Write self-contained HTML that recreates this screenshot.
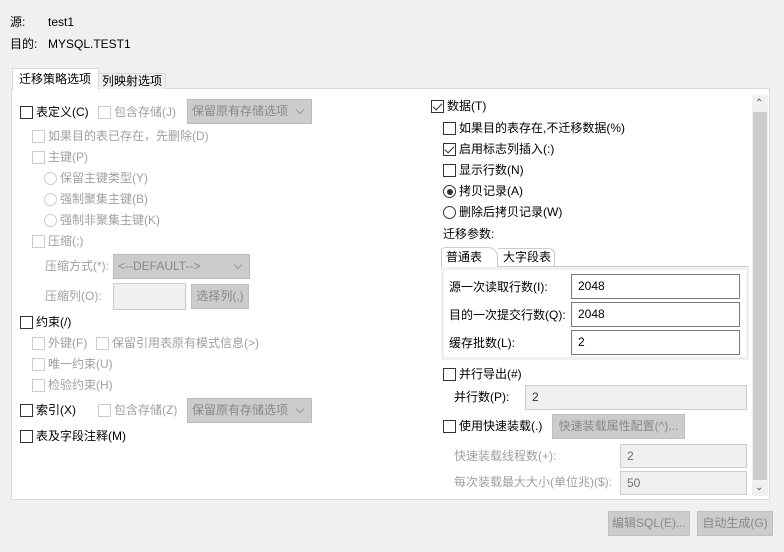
<!DOCTYPE html><html><head><meta charset="utf-8"><style>
*{box-sizing:border-box;margin:0;padding:0}
body{width:784px;height:552px;background:#f0f0f0;font:12px "Liberation Sans","Noto Sans CJK SC",sans-serif;color:#000;position:relative;overflow:hidden}
.a{position:absolute;white-space:nowrap;line-height:16px}
.g{color:#a0a0a0}
.cb{position:absolute;width:13px;height:13px;border:1px solid #333;background:#fff}
.cb.d{border-color:#ccc}
.rd{position:absolute;width:13px;height:13px;border:1px solid #333;border-radius:50%;background:#fff}
.rd.d{border-color:#ccc}
.combo{position:absolute;background:#ccc;border:1px solid #bbb;color:#888;padding-left:4px;line-height:22px;white-space:nowrap;overflow:hidden}
.combo:after{content:"";position:absolute;right:8px;top:7px;width:5px;height:5px;border-right:1px solid #999;border-bottom:1px solid #999;transform:rotate(45deg)}
.in{position:absolute;background:#fff;border:1px solid #7a7a7a;padding-left:6px;line-height:22px}
.in.d{background:#f0f0f0;border-color:#ccc;color:#6d6d6d}
.btn{position:absolute;background:#ccc;border:1px solid #bfbfbf;color:#888;text-align:center;line-height:22px;white-space:nowrap;overflow:hidden}
.ck:after{content:"";position:absolute;left:3px;top:0px;width:4px;height:8px;border-right:1.5px solid #333;border-bottom:1.5px solid #333;transform:rotate(45deg)}
</style></head><body>
<div class="a" style="left:10px;top:14px">源:</div><div class="a" style="left:48px;top:14px">test1</div>
<div class="a" style="left:10px;top:36px">目的:</div><div class="a" style="left:48px;top:36px">MYSQL.TEST1</div>
<div style="position:absolute;left:11px;top:88px;width:759px;height:412px;background:#fff;border:1px solid #d9d9d9"></div>
<div style="position:absolute;left:98px;top:73px;width:68px;height:16px;background:#f0f0f0;border:1px solid #d9d9d9;border-bottom:none"></div>
<div class="a" style="left:102px;top:73px">列映射选项</div>
<div style="position:absolute;left:12px;top:68px;width:87px;height:22px;background:#fff;border:1px solid #d9d9d9;border-bottom:none"></div>
<div class="a" style="left:19px;top:71px">迁移策略选项</div>
<!-- scrollbar -->
<div style="position:absolute;left:752px;top:95px;width:16px;height:401px;background:#f0f0f0"></div>
<div style="position:absolute;left:753px;top:112px;width:14px;height:368px;background:#cdcdcd"></div>
<div class="a" style="left:755px;top:96px;font-size:10px;color:#555">&#8963;</div>
<div class="a" style="left:755px;top:480px;font-size:10px;color:#555">&#8964;</div>
<!-- left -->
<div class="cb" style="left:20px;top:106px"></div><div class="a" style="left:36px;top:104px">表定义(C)</div>
<div class="cb d" style="left:98px;top:106px"></div><div class="a g" style="left:114px;top:104px">包含存储(J)</div>
<div class="combo" style="left:187px;top:99px;width:125px;height:25px">保留原有存储选项</div>
<div class="cb d" style="left:32px;top:130px"></div><div class="a g" style="left:48px;top:128px">如果目的表已存在，先删除(D)</div>
<div class="cb d" style="left:32px;top:151px"></div><div class="a g" style="left:48px;top:149px">主键(P)</div>
<div class="rd d" style="left:44px;top:172px"></div><div class="a g" style="left:60px;top:170px">保留主键类型(Y)</div>
<div class="rd d" style="left:44px;top:193px"></div><div class="a g" style="left:60px;top:191px">强制聚集主键(B)</div>
<div class="rd d" style="left:44px;top:214px"></div><div class="a g" style="left:60px;top:212px">强制非聚集主键(K)</div>
<div class="cb d" style="left:32px;top:235px"></div><div class="a g" style="left:48px;top:233px">压缩(;)</div>
<div class="a g" style="left:45px;top:258px">压缩方式(*):</div>
<div class="combo" style="left:113px;top:254px;width:137px;height:25px">&lt;--DEFAULT--&gt;</div>
<div class="a g" style="left:45px;top:288px">压缩列(O):</div>
<div class="in d" style="left:113px;top:283px;width:73px;height:27px"></div>
<div class="btn" style="left:191px;top:284px;width:58px;height:25px">选择列(,)</div>
<div class="cb" style="left:20px;top:316px"></div><div class="a" style="left:36px;top:314px">约束(/)</div>
<div class="cb d" style="left:32px;top:337px"></div><div class="a g" style="left:48px;top:335px">外键(F)</div>
<div class="cb d" style="left:96px;top:337px"></div><div class="a g" style="left:112px;top:335px">保留引用表原有模式信息(&gt;)</div>
<div class="cb d" style="left:32px;top:358px"></div><div class="a g" style="left:48px;top:356px">唯一约束(U)</div>
<div class="cb d" style="left:32px;top:379px"></div><div class="a g" style="left:48px;top:377px">检验约束(H)</div>
<div class="cb" style="left:20px;top:404px"></div><div class="a" style="left:36px;top:402px">索引(X)</div>
<div class="cb d" style="left:98px;top:404px"></div><div class="a g" style="left:114px;top:402px">包含存储(Z)</div>
<div class="combo" style="left:187px;top:398px;width:125px;height:25px">保留原有存储选项</div>
<div class="cb" style="left:20px;top:430px"></div><div class="a" style="left:36px;top:428px">表及字段注释(M)</div>
<!-- right -->
<div class="cb ck" style="left:431px;top:100px"></div><div class="a" style="left:447px;top:98px">数据(T)</div>
<div class="cb" style="left:443px;top:122px"></div><div class="a" style="left:459px;top:120px">如果目的表存在,不迁移数据(%)</div>
<div class="cb ck" style="left:443px;top:143px"></div><div class="a" style="left:459px;top:141px">启用标志列插入(:)</div>
<div class="cb" style="left:443px;top:164px"></div><div class="a" style="left:459px;top:162px">显示行数(N)</div>
<div class="rd" style="left:443px;top:185px"><div style="position:absolute;left:2.5px;top:2.5px;width:6px;height:6px;border-radius:50%;background:#333"></div></div><div class="a" style="left:459px;top:183px">拷贝记录(A)</div>
<div class="rd" style="left:443px;top:206px"></div><div class="a" style="left:459px;top:204px">删除后拷贝记录(W)</div>
<div class="a" style="left:443px;top:226px">迁移参数:</div>
<div style="position:absolute;left:441px;top:266px;width:308px;height:94px;background:#f0f0f0;border-top:1px solid #ccc"></div>
<div style="position:absolute;left:444px;top:270px;width:302px;height:87px;background:#fff"></div>
<div style="position:absolute;left:441px;top:247px;width:57px;height:20px;background:#fff;border:1px solid #ccc;border-bottom:none;border-radius:4px 10px 0 0"></div>
<div class="a" style="left:446px;top:249px">普通表</div>
<div style="position:absolute;left:498px;top:248px;width:57px;height:18px;border-right:1px solid #ccc;border-top:1px solid #ccc;border-radius:0 6px 0 0"></div>
<div class="a" style="left:503px;top:249px">大字段表</div>
<div class="a" style="left:449px;top:279px">源一次读取行数(I):</div>
<div class="in" style="left:571px;top:274px;width:169px;height:25px">2048</div>
<div class="a" style="left:449px;top:307px">目的一次提交行数(Q):</div>
<div class="in" style="left:571px;top:302px;width:169px;height:25px">2048</div>
<div class="a" style="left:449px;top:335px">缓存批数(L):</div>
<div class="in" style="left:571px;top:330px;width:169px;height:25px">2</div>
<div class="cb" style="left:443px;top:368px"></div><div class="a" style="left:459px;top:366px">并行导出(#)</div>
<div class="a" style="left:454px;top:389px">并行数(P):</div>
<div class="in d" style="left:525px;top:385px;width:222px;height:25px;color:#333">2</div>
<div class="cb" style="left:443px;top:420px"></div><div class="a" style="left:459px;top:418px">使用快速装载(.)</div>
<div class="btn" style="left:552px;top:414px;width:133px;height:25px">快速装载属性配置(^)...</div>
<div class="a g" style="left:454px;top:448px">快速装载线程数(+):</div>
<div class="in d" style="left:620px;top:444px;width:127px;height:24px">2</div>
<div class="a g" style="left:454px;top:474px">每次装载最大大小(单位兆)($):</div>
<div class="in d" style="left:620px;top:471px;width:127px;height:24px">50</div>
<div class="btn" style="left:608px;top:511px;width:82px;height:25px">编辑SQL(E)...</div>
<div class="btn" style="left:697px;top:511px;width:76px;height:25px">自动生成(G)</div>
</body></html>
